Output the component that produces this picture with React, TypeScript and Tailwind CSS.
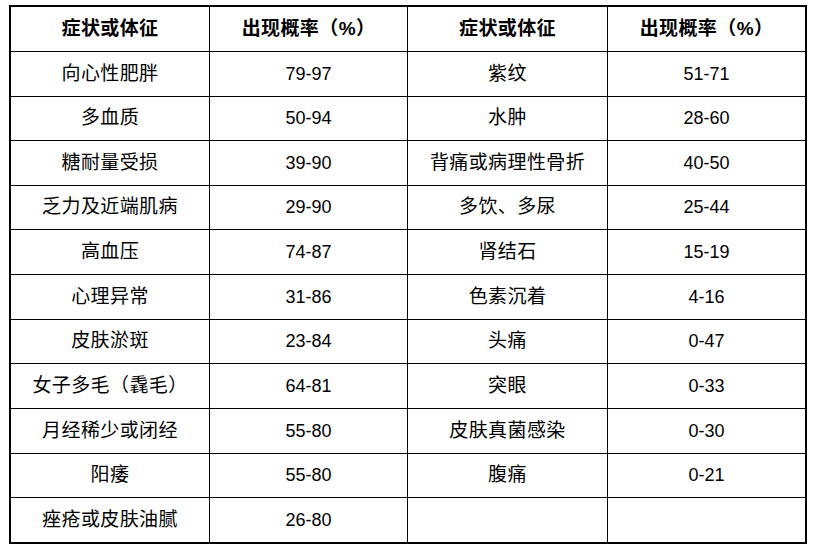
const rows: [string, string, string, string][] = [
  ['向心性肥胖', '79-97', '紫纹', '51-71'],
  ['多血质', '50-94', '水肿', '28-60'],
  ['糖耐量受损', '39-90', '背痛或病理性骨折', '40-50'],
  ['乏力及近端肌病', '29-90', '多饮、多尿', '25-44'],
  ['高血压', '74-87', '肾结石', '15-19'],
  ['心理异常', '31-86', '色素沉着', '4-16'],
  ['皮肤淤斑', '23-84', '头痛', '0-47'],
  ['女子多毛（毳毛）', '64-81', '突眼', '0-33'],
  ['月经稀少或闭经', '55-80', '皮肤真菌感染', '0-30'],
  ['阳痿', '55-80', '腹痛', '0-21'],
  ['痤疮或皮肤油腻', '26-80', '', ''],
];

const headers = ['症状或体征', '出现概率（%）', '症状或体征', '出现概率（%）'];

export default function App() {
  return (
    <div
      className="w-[815px] h-[552px] bg-white pl-[9px] pt-[5px]"
      style={{ fontFamily: '"Liberation Sans", "Noto Sans CJK SC", sans-serif' }}
    >
      <div className="grid w-[798px] grid-cols-[198px_197px_199px_197px] grid-rows-[44px_44px_43px_44px_43px_44px_44px_43px_44px_44px_43px_44px] gap-px border-2 border-black bg-black text-black">
        {headers.map((h, i) => (
          <div key={`h${i}`} className="flex items-center justify-center bg-white text-[19px] font-bold tracking-[0.4px]">
            {h}
          </div>
        ))}
        {rows.map((r, ri) =>
          r.map((c, ci) => (
            <div
              key={`${ri}-${ci}`}
              className={
                ci % 2 === 0
                  ? 'flex items-center justify-center bg-white text-[19px] tracking-[0.4px]'
                  : 'flex items-center justify-center bg-white text-[18px]'
              }
            >
              {c}
            </div>
          ))
        )}
      </div>
    </div>
  );
}
